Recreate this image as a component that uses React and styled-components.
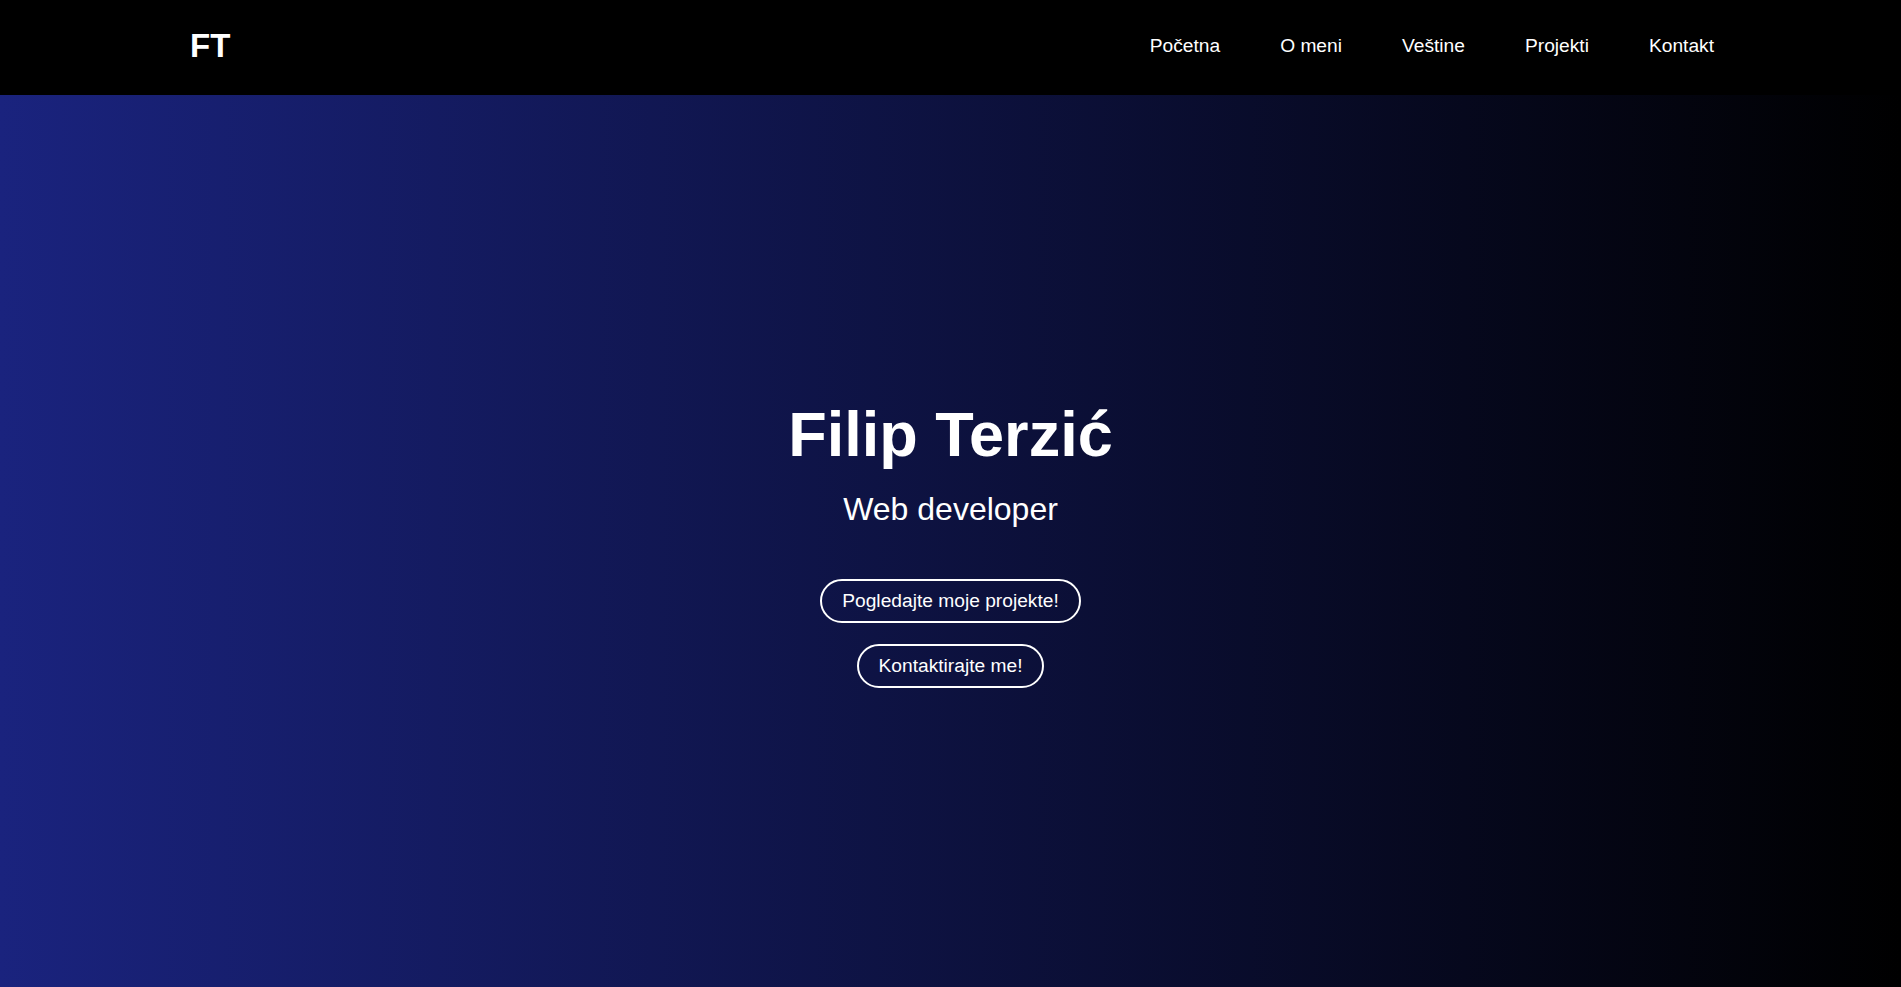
import React from "react";
import styled, { createGlobalStyle } from "styled-components";

const GlobalStyle = createGlobalStyle`
  * {
    box-sizing: border-box;
  }

  body {
    margin: 0;
    font-family: "Liberation Sans", Arial, sans-serif;
    background: #000;
    color: #fff;
  }
`;

const links = ["Početna", "O meni", "Veštine", "Projekti", "Kontakt"];

export default function App() {
  return (
    <Page>
      <GlobalStyle />
      <Nav>
        <Logo>FT</Logo>
        <Menu>
          {links.map((l) => (
            <MenuItem key={l}>
              <a href="#">{l}</a>
            </MenuItem>
          ))}
        </Menu>
      </Nav>

      <Hero>
        <Title>Filip Terzić</Title>
        <Subtitle>Web developer</Subtitle>
        <Actions>
          <Button>Pogledajte moje projekte!</Button>
          <Button>Kontaktirajte me!</Button>
        </Actions>
      </Hero>
    </Page>
  );
}

const Page = styled.div`
  min-height: 100vh;
  display: flex;
  flex-direction: column;
`;

const Nav = styled.nav`
  height: 95px;
  flex-shrink: 0;
  background: #000;
  display: flex;
  align-items: center;
  justify-content: space-between;
  padding: 0 187px 3px 190px;
`;

const Logo = styled.div`
  font-size: 33px;
  font-weight: 700;
  color: #fff;
`;

const Menu = styled.ul`
  list-style: none;
  margin: 0;
  padding: 0;
  display: flex;
  gap: 60px;
`;

const MenuItem = styled.li`
  a {
    color: #fff;
    text-decoration: none;
    font-size: 19.2px;
  }
`;

const Hero = styled.section`
  flex: 1;
  display: flex;
  flex-direction: column;
  align-items: center;
  justify-content: center;
  text-align: center;
  background: linear-gradient(to right, #1a237e, #000000);
  padding-top: 4px;
`;

const Title = styled.h1`
  margin: 0;
  font-size: 63px;
  font-weight: 700;
  line-height: 1.15;
`;

const Subtitle = styled.p`
  margin: 20px 0 0;
  font-size: 32px;
  line-height: 1.15;
`;

const Actions = styled.div`
  margin-top: 51px;
  display: flex;
  flex-direction: column;
  align-items: center;
  gap: 21px;
`;

const Button = styled.button`
  background: transparent;
  color: #fff;
  border: 2px solid #fff;
  border-radius: 22px;
  padding: 9px 20px;
  font-family: "Liberation Sans", Arial, sans-serif;
  font-size: 19.2px;
  line-height: 22px;
  cursor: pointer;
`;
